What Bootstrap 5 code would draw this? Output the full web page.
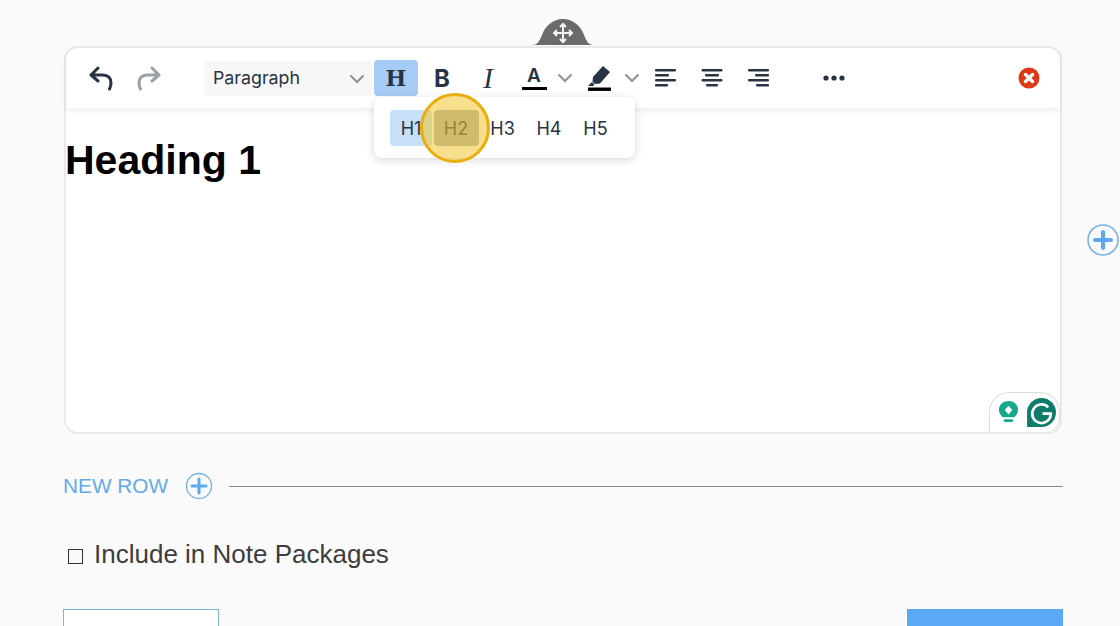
<!DOCTYPE html>
<html lang="en">
<head>
    <meta charset="UTF-8">
    <meta name="viewport" content="width=device-width, initial-scale=1.0">
    <title>Text block editor</title>
    <link rel="stylesheet" href="https://cdn.jsdelivr.net/npm/bootstrap@5.3.0/dist/css/bootstrap.min.css">
    <style>
        html, body { height: 626px; overflow: hidden; }
        body { background: #fafafa; font-family: "Liberation Sans", Arial, sans-serif; }
        .page-wrap { width: 1000px; margin-left: 63px; padding-top: 46px; }
        .editor-box { position: relative; height: 388px; margin: 0 1px; background: #fff; border: 2px solid #e9e9e9; border-radius: 14px; }
        .drag-tab { position: absolute; left: 466px; top: -30px; width: 62px; height: 28px; }
        .edit-bar { height: 60px; padding: 12px 9px 0 11px; gap: 2px; border-radius: 12px 12px 0 0; box-shadow: 0 3px 6px rgba(0, 0, 0, .07); color: #273444; font-family: Inter, sans-serif; }
        .tool-btn { width: 44px; height: 36px; flex: none; border-radius: 4px; }
        .tool-btn.wide { width: 48px; margin-right: -2px; }
        .tool-btn.on { background: #a6ccf5; }
        .tool-btn.more { margin-left: 30px; }
        .tool-caret { width: 20px; height: 36px; flex: none; }
        .tool-caret.tight { margin-left: -3px; }
        .tool-caret.tighter { margin-left: -1px; }
        .para-select { width: 168px; height: 35px; margin: 1px 0 0 31px; padding: 0 7px 0 9px; background: #f7f7f7; border-radius: 4px; font-size: 17.8px; }
        .glyph-h { font: bold 22px "DejaVu Serif", serif; }
        .glyph-b { font: bold 24px Inter, sans-serif; }
        .glyph-i { font: italic 29px "Liberation Serif", serif; }
        .glyph-a { font: 600 19px/17px Inter, sans-serif; border-bottom: 3px solid #000; width: 25px; text-align: center; padding-bottom: 3px; }
        .heading-menu { position: absolute; left: 308px; top: 49px; width: 261px; height: 61px; padding: 13px 0 0 16px; gap: 1.5px; background: #fff; border-radius: 8px; box-shadow: 0 2px 8px rgba(0, 0, 0, .16); color: #273444; font: 18px Inter, sans-serif; }
        .heading-opt { width: 45px; height: 36px; border-radius: 4px; }
        .heading-opt.first { width: 42px; background: #c8dff9; }
        .heading-opt.hover { background: #a8afb4; }
        .click-ring { position: absolute; left: 354px; top: 45px; width: 70px; height: 70px; border: 3px solid #e8ae0c; border-radius: 50%; background: rgba(240, 196, 50, .55); }
        .editor-text { padding: 0; margin: 29px 0 0 -1px; font: bold 41px/46px "Liberation Sans", Arial, sans-serif; color: #000; }
        .add-col { position: absolute; left: 1021px; top: 176px; }
        .gram-tab { position: absolute; right: 0; bottom: 0; width: 71px; height: 40px; gap: 7px; padding: 0 0 0 8px; background: #fff; border: 1.5px solid #dcdcdc; border-bottom: 0; border-radius: 20px 20px 14px 0; }
        .new-row { height: 26px; margin-top: 39px; color: #64a9e8; font-size: 20.8px; }
        .new-plus { margin-left: 17px; }
        .row-rule { height: 1px; background: #8a8a8a; margin: 1px 0 0 16px; }
        .note-check { margin-top: 40px; height: 30px; padding-left: 5px; gap: 11px; color: #3d3d3d; font-size: 26px; }
        .check-box { width: 15px; height: 15px; margin-top: 4px; border: 1.5px solid #333; }
        .foot-row { margin-top: 40px; }
        .foot-btn { width: 156px; height: 17px; padding: 0; border-radius: 0; }
        .foot-btn.outline { background: #fff; border: 1.5px solid #7ab6de; border-bottom: 0; }
        .foot-btn.solid { background: #5aa9f5; border: 0; }
    </style>
</head>
<body>

<div class="page-wrap">
    <div class="editor-box">
        <svg class="drag-tab" viewBox="0 0 62 28">
            <path d="M0 27 C6 27 8 22 10 17 C13 8 21 1 31 1 C41 1 49 8 52 17 C54 22 56 27 62 27 Z" fill="#6b6b6b"/>
            <path d="M31 6 V24 M22 15 H40 M28 9 L31 6 L34 9 M28 21 L31 24 L34 21 M25 12 L22 15 L25 18 M37 12 L40 15 L37 18" fill="none" stroke="#f4f4f4" stroke-width="2"/>
        </svg>

        <div class="edit-bar d-flex align-items-start">
            <div class="tool-btn wide d-flex align-items-center justify-content-center">
                <svg width="26" height="26" viewBox="0 0 26 26" fill="none" stroke="#273444" stroke-width="3" stroke-linecap="round" stroke-linejoin="round"><path d="M10 3 L3 10 L10 16 M3 10 H15 C20 10 23 13 23 18 C23 20 22.500 22 21.500 24"/></svg>
            </div>
            <div class="tool-btn wide d-flex align-items-center justify-content-center">
                <svg width="26" height="26" viewBox="0 0 26 26" fill="none" stroke="#9aa0a6" stroke-width="3" stroke-linecap="round" stroke-linejoin="round"><path d="M16 3 L23 10 L16 16 M23 10 H11 C6 10 3 13 3 18 C3 20 3.500 22 4.500 24"/></svg>
            </div>
            <div class="para-select d-flex align-items-center justify-content-between">
                <span>Paragraph</span>
                <svg width="16" height="10" viewBox="0 0 16 10" fill="none" stroke="#8d9299" stroke-width="2" stroke-linecap="round"><path d="M2 2 L8 8 L14 2"/></svg>
            </div>
            <div class="tool-btn on d-flex align-items-center justify-content-center glyph-h">H</div>
            <div class="tool-btn d-flex align-items-center justify-content-center glyph-b">B</div>
            <div class="tool-btn d-flex align-items-center justify-content-center glyph-i">I</div>
            <div class="tool-btn d-flex align-items-center justify-content-center"><span class="glyph-a">A</span></div>
            <div class="tool-caret tight d-flex align-items-center justify-content-center">
                <svg width="16" height="10" viewBox="0 0 16 10" fill="none" stroke="#8d9299" stroke-width="2" stroke-linecap="round"><path d="M2 2 L8 8 L14 2"/></svg>
            </div>
            <div class="tool-btn d-flex align-items-center justify-content-center">
                <svg width="24" height="26" viewBox="0 0 24 26"><path d="M16 1 L23 7 L13 18.500 L8 19 L5.500 16.500 L6 12 Z M5 17 L7.500 19.500 L6 21 L1 21 Z" fill="#273444"/><rect x="1" y="22.500" width="23" height="3.400" fill="#000"/></svg>
            </div>
            <div class="tool-caret tighter d-flex align-items-center justify-content-center">
                <svg width="16" height="10" viewBox="0 0 16 10" fill="none" stroke="#8d9299" stroke-width="2" stroke-linecap="round"><path d="M2 2 L8 8 L14 2"/></svg>
            </div>
            <div class="tool-btn d-flex align-items-center justify-content-center">
                <svg width="22" height="20" viewBox="0 0 22 20" fill="#273444"><rect y="1" width="21" height="2.600" rx="1"/><rect y="6" width="14" height="2.600" rx="1"/><rect y="11" width="21" height="2.600" rx="1"/><rect y="16" width="13" height="2.600" rx="1"/></svg>
            </div>
            <div class="tool-btn d-flex align-items-center justify-content-center">
                <svg width="22" height="20" viewBox="0 0 22 20" fill="#273444"><rect x="0.500" y="1" width="21" height="2.600" rx="1"/><rect x="4" y="6" width="14" height="2.600" rx="1"/><rect x="0.500" y="11" width="21" height="2.600" rx="1"/><rect x="5" y="16" width="12" height="2.600" rx="1"/></svg>
            </div>
            <div class="tool-btn d-flex align-items-center justify-content-center">
                <svg width="22" height="20" viewBox="0 0 22 20" fill="#273444"><rect x="1" y="1" width="21" height="2.600" rx="1"/><rect x="8" y="6" width="14" height="2.600" rx="1"/><rect x="1" y="11" width="21" height="2.600" rx="1"/><rect x="9" y="16" width="13" height="2.600" rx="1"/></svg>
            </div>
            <div class="tool-btn more d-flex align-items-center justify-content-center">
                <svg width="22" height="6" viewBox="0 0 22 6" fill="#273444"><circle cx="3" cy="3" r="2.600"/><circle cx="11" cy="3" r="2.600"/><circle cx="19" cy="3" r="2.600"/></svg>
            </div>
            <div class="tool-btn ms-auto d-flex align-items-center justify-content-center">
                <svg width="22" height="22" viewBox="0 0 22 22"><circle cx="11" cy="11" r="10.500" fill="#dc3a16"/><path d="M7.500 7.500 L14.500 14.500 M14.500 7.500 L7.500 14.500" stroke="#fff" stroke-width="3.400" stroke-linecap="round"/></svg>
            </div>
        </div>

        <h1 class="editor-text">Heading 1</h1>

        <div class="heading-menu d-flex">
            <div class="heading-opt first d-flex align-items-center justify-content-center">H1</div>
            <div class="heading-opt hover d-flex align-items-center justify-content-center">H2</div>
            <div class="heading-opt d-flex align-items-center justify-content-center">H3</div>
            <div class="heading-opt d-flex align-items-center justify-content-center">H4</div>
            <div class="heading-opt d-flex align-items-center justify-content-center">H5</div>
        </div>
        <div class="click-ring"></div>

        <svg class="add-col" width="32" height="32" viewBox="0 0 32 32">
            <circle cx="16" cy="16" r="15" fill="#fafafa" stroke="#72b0e6" stroke-width="1.500"/>
            <path d="M16 8 V24 M8 16 H24" stroke="#5ea8f2" stroke-width="4" stroke-linecap="round"/>
        </svg>

        <div class="gram-tab d-flex align-items-center">
            <svg width="21" height="27" viewBox="0 0 22 26">
                <path d="M11 1 C5 1 1 5 1 10.500 C1 14 3 16 5 18 H17 C19 16 21 14 21 10.500 C21 5 17 1 11 1 Z" fill="#15a88a"/>
                <rect x="6" y="20" width="10" height="3" rx="1.500" fill="#15a88a"/>
                <path d="M11 6 L15 10.500 L11 15 L7 10.500 Z" fill="#fff"/>
            </svg>
            <svg width="31" height="31" viewBox="0 0 30 30">
                <path d="M15 1 A14 14 0 0 1 15 29 H1 V15 A14 14 0 0 1 15 1 Z" fill="#0e7c6b"/>
                <path d="M21.500 10 A9 9 0 1 0 24 16 H16" fill="none" stroke="#fff" stroke-width="2.600"/>
            </svg>
        </div>
    </div>

    <div class="new-row d-flex align-items-center">
        <span>NEW ROW</span>
        <svg class="new-plus" width="28" height="28" viewBox="0 0 28 28">
            <circle cx="14" cy="14" r="12.500" fill="none" stroke="#72b0e6" stroke-width="1.300"/>
            <path d="M14 7 V21 M7 14 H21" stroke="#5ea8f2" stroke-width="3" stroke-linecap="round"/>
        </svg>
        <div class="row-rule flex-grow-1"></div>
    </div>

    <div class="note-check d-flex align-items-center">
        <span class="check-box"></span>
        <span>Include in Note Packages</span>
    </div>

    <div class="foot-row d-flex justify-content-between">
        <button type="button" class="btn foot-btn outline"></button>
        <button type="button" class="btn foot-btn solid"></button>
    </div>
</div>

</body>
</html>
